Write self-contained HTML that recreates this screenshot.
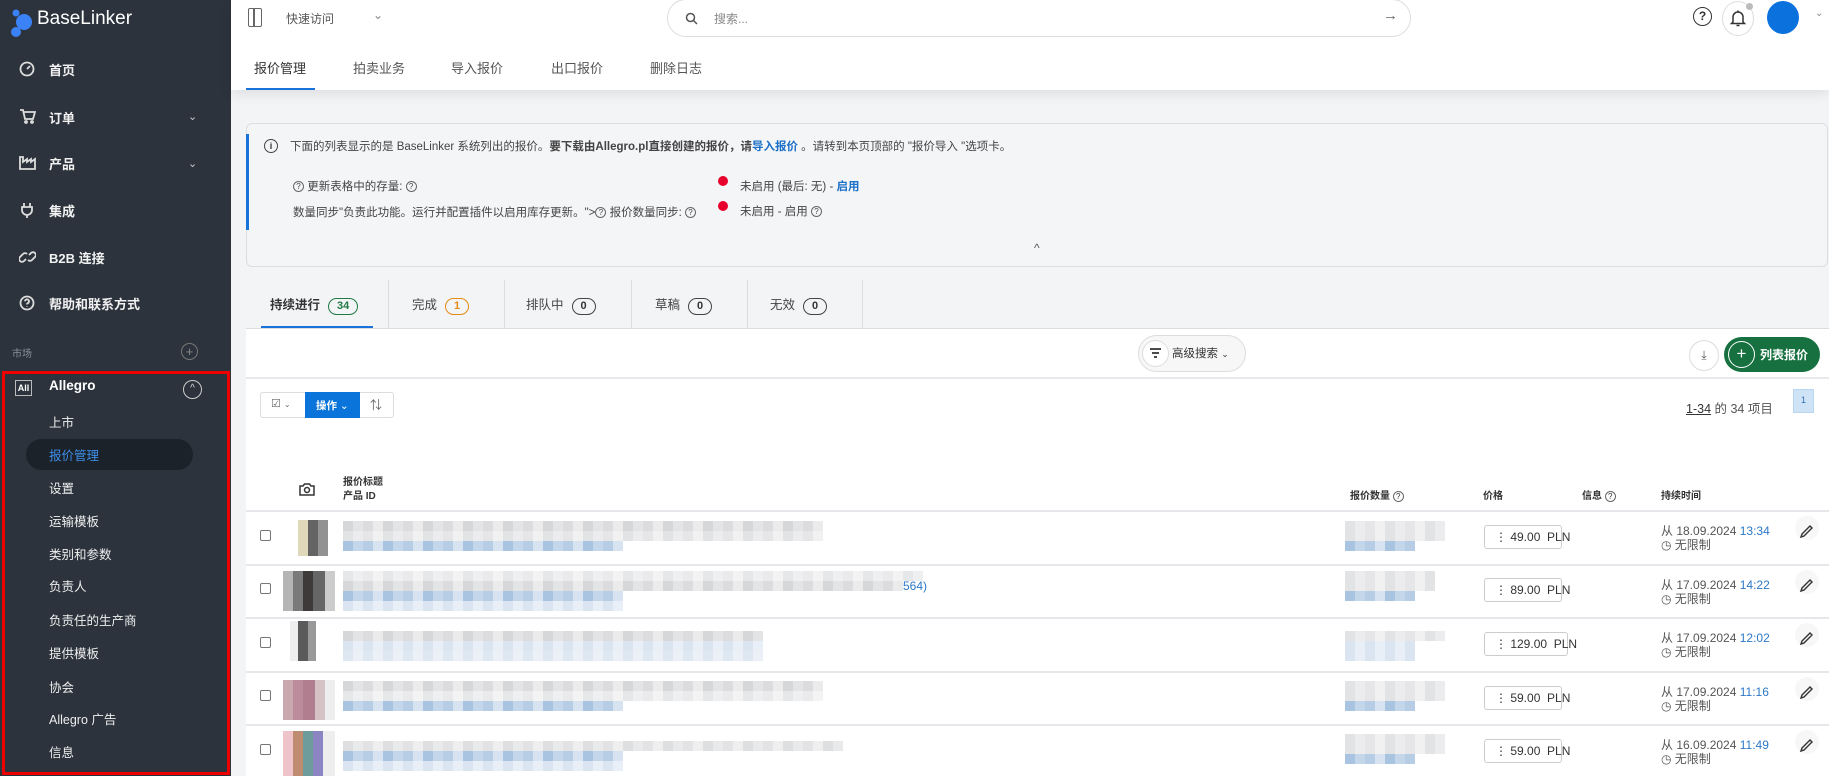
<!DOCTYPE html>
<html><head><meta charset="utf-8"><style>
*{box-sizing:border-box;margin:0;padding:0}
body{width:1829px;height:776px;overflow:hidden;background:#f3f4f6;font-family:"Liberation Sans","Noto Sans CJK SC",sans-serif;position:relative;color:#333}
.a{position:absolute;white-space:nowrap}
#sb{position:absolute;left:0;top:0;width:231px;height:776px;background:#2c333c;color:#fff}
.mi{position:absolute;left:49px;font-size:13px;font-weight:bold;color:#f1f1f1;white-space:nowrap}
.si{position:absolute;left:19px}
.chev{position:absolute;left:188px;color:#ccc;font-size:11px}
.sub{position:absolute;left:49px;font-size:12.5px;color:#eee;white-space:nowrap}
.gray{background:repeating-linear-gradient(90deg,#d6d7d9 0 10px,#e3e4e6 10px 20px,#dcdcdf 20px 30px,#ebebec 30px 40px)}
.blue{background:repeating-linear-gradient(90deg,#a9c4e0 0 10px,#c3d6ea 10px 20px,#b7cde6 20px 30px,#d7e3f0 30px 40px)}
.lblue{background:repeating-linear-gradient(90deg,#dbe5f1 0 10px,#e9eff6 10px 20px)}
.th{position:absolute;font-size:10px;font-weight:bold;color:#333;white-space:nowrap}
.q{display:inline-block;width:11px;height:11px;border:1px solid #666;border-radius:50%;font-size:8px;line-height:9px;text-align:center;font-weight:normal;vertical-align:middle}
.cb{position:absolute;left:260px;width:11px;height:11px;border:1px solid #777;border-radius:2px;background:#fff}
.price{position:absolute;left:1484px;width:78px;height:24px;border:1px solid #ccc;border-radius:3px;background:#fff;font-size:12px;line-height:22px;padding-left:10px;color:#333;white-space:nowrap}
.date{position:absolute;left:1661px;font-size:12px;color:#555;line-height:14px;white-space:nowrap}
.date b{font-weight:normal;color:#2c78c7}
.pen{position:absolute;left:1795px;width:24px;height:24px;border-radius:50%;background:#f7f7f7}
.rl{position:absolute;left:246px;width:1583px;height:2px;background:#e6e7ea}
.badge{display:inline-block;border:1.5px solid;border-radius:10px;font-size:11px;padding:0 8px;line-height:15px;margin-left:8px;font-weight:bold}
.st{position:absolute;top:294px;font-size:12.5px;color:#444;white-space:nowrap}
</style></head><body>
<div id="sb">
 <svg class="a" style="left:10px;top:8px" width="24" height="30" viewBox="0 0 24 30"><circle cx="6" cy="5" r="3.5" fill="#3b82f6"/><circle cx="14" cy="14" r="8" fill="#3b82f6"/><circle cx="6" cy="24" r="5" fill="#3b82f6"/></svg>
 <div class="a" style="left:37px;top:8px;font-size:19px;color:#fff">BaseLinker</div>
 <svg class="si" style="top:61px" width="16" height="16" viewBox="0 0 16 16" fill="none" stroke="#ddd" stroke-width="1.8"><circle cx="8" cy="8" r="6.5"/><path d="M8 8l3-3"/></svg><div class="mi" style="top:60px">首页</div>
 <svg class="si" style="top:108px" width="17" height="16" viewBox="0 0 17 16" fill="none" stroke="#ddd" stroke-width="1.8"><path d="M1 2h3l2 9h8l2-7H5"/><circle cx="7" cy="14" r="1"/><circle cx="13" cy="14" r="1"/></svg><div class="mi" style="top:108px">订单</div><div class="chev" style="top:110px">⌄</div>
 <svg class="si" style="top:155px" width="17" height="15" viewBox="0 0 17 15" fill="none" stroke="#ddd" stroke-width="1.8"><path d="M1 14V2h3v5l4-3v3l4-3v3l4-3v10z"/></svg><div class="mi" style="top:154px">产品</div><div class="chev" style="top:157px">⌄</div>
 <svg class="si" style="top:202px" width="16" height="16" viewBox="0 0 16 16" fill="none" stroke="#ddd" stroke-width="1.8"><path d="M5 1v4M11 1v4M3 5h10v3a5 5 0 0 1-10 0zM8 13v3"/></svg><div class="mi" style="top:201px">集成</div>
 <svg class="si" style="top:249px" width="17" height="16" viewBox="0 0 17 16" fill="none" stroke="#ddd" stroke-width="1.8"><path d="M7 10l-2 2a2.8 2.8 0 0 1-4-4l3-3a2.8 2.8 0 0 1 4 0M10 6l2-2a2.8 2.8 0 0 1 4 4l-3 3a2.8 2.8 0 0 1-4 0"/></svg><div class="mi" style="top:248px">B2B 连接</div>
 <svg class="si" style="top:295px" width="16" height="16" viewBox="0 0 16 16" fill="none" stroke="#ddd" stroke-width="1.8"><circle cx="8" cy="8" r="6.5"/><path d="M6 6.3a2 2 0 1 1 2.5 2c-.4.2-.5.5-.5 1.2M8 11.5v.5"/></svg><div class="mi" style="top:294px">帮助和联系方式</div>
 <div class="a" style="left:12px;top:345px;font-size:10px;color:#8a9099">市场</div>
 <div class="a" style="left:181px;top:343px;width:17px;height:17px;border:1px solid #777;border-radius:50%;color:#888;font-size:13px;line-height:15px;text-align:center">+</div>
 <div class="a" style="left:2px;top:371px;width:228px;height:404px;border:3px solid #e00"></div>
 <div class="a" style="left:15px;top:380px;width:17px;height:16px;border:1px solid #bbb;font-size:9px;font-weight:bold;text-align:center;line-height:14px">All</div>
 <div class="a" style="left:49px;top:378px;font-size:13.5px;font-weight:bold">Allegro</div>
 <div class="a" style="left:183px;top:380px;width:19px;height:19px;border:1.5px solid #ccc;border-radius:50%;text-align:center;font-size:10px;line-height:16px;color:#ddd">^</div>
 <div class="sub" style="top:412px">上市</div>
 <div class="a" style="left:26px;top:439px;width:167px;height:31px;border-radius:16px;background:#1c2229"></div>
 <div class="sub" style="top:445px;color:#3d8de8">报价管理</div>
 <div class="sub" style="top:478px">设置</div>
 <div class="sub" style="top:511px">运输模板</div>
 <div class="sub" style="top:544px">类别和参数</div>
 <div class="sub" style="top:576px">负责人</div>
 <div class="sub" style="top:610px">负责任的生产商</div>
 <div class="sub" style="top:643px">提供模板</div>
 <div class="sub" style="top:677px">协会</div>
 <div class="sub" style="top:709px">Allegro 广告</div>
 <div class="sub" style="top:742px">信息</div>
</div>
<!-- header -->
<div class="a" style="left:231px;top:0;width:1598px;height:90px;background:#fff;box-shadow:0 4px 12px rgba(0,0,0,.09)"></div>
<div class="a" style="left:248px;top:8px;width:14px;height:19px;border:1.5px solid #666;border-radius:2px"></div>
<div class="a" style="left:253px;top:8px;width:1.5px;height:19px;background:#666"></div>
<div class="a" style="left:286px;top:10px;font-size:12px;color:#555">快速访问</div>
<div class="a" style="left:373px;top:8px;font-size:12px;color:#888">⌄</div>
<div class="a" style="left:667px;top:-1px;width:744px;height:38px;border:1px solid #ddd;border-radius:19px;background:#fff"></div>
<svg class="a" style="left:685px;top:12px" width="13" height="13" viewBox="0 0 13 13" fill="none" stroke="#555" stroke-width="1.5"><circle cx="5.5" cy="5.5" r="4"/><path d="M8.5 8.5l3.5 3.5"/></svg>
<div class="a" style="left:714px;top:10px;font-size:12px;color:#888">搜索...</div>
<div class="a" style="left:1383px;top:7px;font-size:15px;color:#666">→</div>
<div class="a" style="left:1693px;top:7px;width:19px;height:19px;border:1.5px solid #333;border-radius:50%;text-align:center;font-size:12px;line-height:16px;font-weight:bold">?</div>
<div class="a" style="left:1722px;top:1px;width:32px;height:35px;border:1px solid #ddd;border-radius:50%"></div>
<svg class="a" style="left:1730px;top:9px" width="16" height="18" viewBox="0 0 16 18" fill="none" stroke="#333" stroke-width="1.5"><path d="M3 13V8a5 5 0 0 1 10 0v5l1.5 1.5h-13zM6.5 16.5h3M8 1.5v1.5"/></svg>
<div class="a" style="left:1746px;top:3px;width:7px;height:7px;border-radius:50%;background:#bbb"></div>
<div class="a" style="left:1767px;top:1px;width:32px;height:33px;border-radius:50%;background:#0b72dd"></div>
<div class="a" style="left:1815px;top:8px;font-size:10px;color:#888">⌄</div>
<div class="a" style="left:254px;top:58px;font-size:13px;color:#333">报价管理</div>
<div class="a" style="left:353px;top:58px;font-size:13px;color:#555">拍卖业务</div>
<div class="a" style="left:451px;top:58px;font-size:13px;color:#555">导入报价</div>
<div class="a" style="left:551px;top:58px;font-size:13px;color:#555">出口报价</div>
<div class="a" style="left:650px;top:58px;font-size:13px;color:#555">删除日志</div>
<div class="a" style="left:246px;top:88px;width:69px;height:2px;background:#1a73d9"></div>
<!-- info -->
<div class="a" style="left:246px;top:123px;width:1582px;height:144px;border:1px solid #dcdde0;border-radius:6px;background:#f4f5f7"></div>
<div class="a" style="left:246px;top:134px;width:3px;height:96px;background:#1a73d9"></div>
<div class="a" style="left:264px;top:139px;width:14px;height:14px;border:1.3px solid #444;border-radius:50%;font-size:9px;text-align:center;line-height:12px;font-weight:bold">i</div>
<div class="a" style="left:290px;top:138px;font-size:11.5px;color:#444">下面的列表显示的是 BaseLinker 系统列出的报价。<b>要下载由Allegro.pl直接创建的报价，请<span style="color:#1a6fc7">导入报价</span></b> 。请转到本页顶部的 "报价导入 "选项卡。</div>
<div class="a" style="left:293px;top:178px;font-size:11.5px;color:#444"><span class="q">?</span> 更新表格中的存量: <span class="q">?</span></div>
<div class="a" style="left:718px;top:176px;width:10px;height:10px;border-radius:50%;background:#e8002c"></div>
<div class="a" style="left:740px;top:178px;font-size:11.5px;color:#444">未启用 (最后: 无) - <b style="color:#1a6fc7">启用</b></div>
<div class="a" style="left:293px;top:204px;font-size:11.5px;color:#444">数量同步"负责此功能。运行并配置插件以启用库存更新。"&gt;<span class="q">?</span> 报价数量同步: <span class="q">?</span></div>
<div class="a" style="left:718px;top:201px;width:10px;height:10px;border-radius:50%;background:#e8002c"></div>
<div class="a" style="left:740px;top:203px;font-size:11.5px;color:#444">未启用 - 启用 <span class="q">?</span></div>
<div class="a" style="left:1034px;top:241px;font-size:12px;color:#555">^</div>
<!-- status tabs -->
<div class="st" style="left:270px;font-weight:bold;color:#333">持续进行<span class="badge" style="color:#1f7a45;border-color:#1f7a45">34</span></div>
<div class="a" style="left:261px;top:326px;width:112px;height:3px;background:#1a73d9"></div>
<div class="a" style="left:388px;top:280px;width:1px;height:48px;background:#ddd"></div>
<div class="st" style="left:412px">完成<span class="badge" style="color:#e58a14;border-color:#e58a14">1</span></div>
<div class="a" style="left:504px;top:280px;width:1px;height:48px;background:#ddd"></div>
<div class="st" style="left:526px">排队中<span class="badge" style="color:#333;border-color:#444">0</span></div>
<div class="a" style="left:631px;top:280px;width:1px;height:48px;background:#ddd"></div>
<div class="st" style="left:655px">草稿<span class="badge" style="color:#333;border-color:#444">0</span></div>
<div class="a" style="left:747px;top:280px;width:1px;height:48px;background:#ddd"></div>
<div class="st" style="left:770px">无效<span class="badge" style="color:#333;border-color:#444">0</span></div>
<div class="a" style="left:862px;top:280px;width:1px;height:48px;background:#ddd"></div>
<!-- panel -->
<div class="a" style="left:246px;top:328px;width:1583px;height:448px;background:#fff;border-top:1px solid #ddd"></div>
<div class="a" style="left:1138px;top:335px;width:108px;height:37px;border:1px solid #ddd;border-radius:19px;background:#f7f7f8"></div>
<div class="a" style="left:1142px;top:340px;width:27px;height:27px;border:1px solid #ddd;border-radius:50%;background:#fff"></div>
<svg class="a" style="left:1149px;top:347px" width="13" height="12" viewBox="0 0 13 12" stroke="#333" stroke-width="1.8"><path d="M1 2h11M3 6h7M5 10h3"/></svg>
<div class="a" style="left:1172px;top:345px;font-size:11.5px;color:#333">高级搜索 <span style="font-size:9px">⌄</span></div>
<div class="a" style="left:1689px;top:340px;width:30px;height:31px;border:1px solid #ddd;border-radius:50%;text-align:center;font-size:12px;line-height:29px;color:#555">⤓</div>
<div class="a" style="left:1724px;top:337px;width:96px;height:35px;border-radius:18px;background:#16703f"></div>
<div class="a" style="left:1728px;top:341px;width:27px;height:27px;border:1.5px solid #fff;border-radius:50%;color:#fff;text-align:center;font-size:17px;line-height:23px">+</div>
<div class="a" style="left:1760px;top:346px;font-size:12px;color:#fff;font-weight:bold">列表报价</div>
<div class="a" style="left:246px;top:377px;width:1583px;height:2px;background:#e8e9ec"></div>
<div class="a" style="left:260px;top:392px;width:134px;height:26px;border:1px solid #ddd;border-radius:3px;background:#fff"></div>
<div class="a" style="left:271px;top:397px;font-size:11px;color:#666">☑ <span style="font-size:8px">⌄</span></div>
<div class="a" style="left:305px;top:392px;width:55px;height:26px;background:#0a74da"></div>
<div class="a" style="left:316px;top:398px;font-size:10.5px;color:#fff;font-weight:bold">操作 <span style="font-weight:normal">⌄</span></div>
<div class="a" style="left:370px;top:396px;font-size:12px;color:#666">⇅</div>
<div class="a" style="left:1686px;top:398px;font-size:12.5px;color:#555"><u style="color:#333">1-34</u> 的 34 项目</div>
<div class="a" style="left:1793px;top:389px;width:21px;height:24px;background:#cfe3f6;border:1px solid #b9d6f2;font-size:9px;text-align:center;line-height:20px;color:#2f6fb4">1</div>
<!-- table header -->
<svg class="a" style="left:299px;top:482px" width="16" height="14" viewBox="0 0 16 14" fill="none" stroke="#333" stroke-width="1.5"><path d="M1 4h3l1.5-2h5L12 4h3v9H1z"/><circle cx="8" cy="8" r="2.5"/></svg>
<div class="th" style="left:343px;top:473px">报价标题</div>
<div class="th" style="left:343px;top:487px">产品 ID</div>
<div class="th" style="left:1350px;top:487px">报价数量 <span class="q">?</span></div>
<div class="th" style="left:1483px;top:487px">价格</div>
<div class="th" style="left:1582px;top:487px">信息 <span class="q">?</span></div>
<div class="th" style="left:1661px;top:487px">持续时间</div>
<div class="rl" style="top:510px"></div>
<!-- row 1 -->
<div class="cb" style="top:530px"></div>
<div class="a" style="left:290px;top:520px;width:40px;height:36px;opacity:.8;background:linear-gradient(90deg,#fff 0 8px,#d9ceaa 8px 18px,#3d3d3d 18px 28px,#777 28px 38px,#fff 38px)"></div>
<div class="a gray" style="left:343px;top:521px;width:480px;height:10px"></div>
<div class="a gray" style="left:343px;top:531px;width:480px;height:10px;opacity:.7"></div>
<div class="a blue" style="left:343px;top:541px;width:280px;height:10px"></div>
<div class="a gray" style="left:1345px;top:521px;width:100px;height:20px;opacity:.7"></div>
<div class="a blue" style="left:1345px;top:541px;width:70px;height:10px"></div>
<div class="price" style="top:525px">⋮ 49.00&nbsp; PLN</div>
<div class="date" style="top:524px">从 18.09.2024 <b>13:34</b><br>◷ 无限制</div>
<div class="pen" style="top:516px"></div>
<div class="rl" style="top:564px"></div>
<!-- row 2 -->
<div class="cb" style="top:583px"></div>
<div class="a" style="left:283px;top:571px;width:52px;height:40px;background:linear-gradient(90deg,#b5b5b5 0 10px,#7a7a7a 10px 20px,#3e3a3a 20px 30px,#666 30px 42px,#ccc 42px)"></div>
<div class="a gray" style="left:343px;top:571px;width:580px;height:10px;opacity:.6"></div>
<div class="a gray" style="left:343px;top:581px;width:560px;height:10px"></div>
<div class="a" style="left:903px;top:579px;font-size:12px;color:#2c78c7">564)</div>
<div class="a blue" style="left:343px;top:591px;width:280px;height:10px"></div>
<div class="a lblue" style="left:343px;top:601px;width:280px;height:10px"></div>
<div class="a gray" style="left:1345px;top:571px;width:90px;height:20px;opacity:.7"></div>
<div class="a blue" style="left:1345px;top:591px;width:70px;height:10px"></div>
<div class="price" style="top:578px">⋮ 89.00&nbsp; PLN</div>
<div class="date" style="top:578px">从 17.09.2024 <b>14:22</b><br>◷ 无限制</div>
<div class="pen" style="top:570px"></div>
<div class="rl" style="top:617px"></div>
<!-- row 3 -->
<div class="cb" style="top:637px"></div>
<div class="a" style="left:290px;top:621px;width:34px;height:40px;background:linear-gradient(90deg,#eee 0 8px,#5a5a5a 8px 18px,#999 18px 26px,#fff 26px)"></div>
<div class="a gray" style="left:343px;top:631px;width:420px;height:10px"></div>
<div class="a lblue" style="left:343px;top:641px;width:420px;height:10px"></div>
<div class="a lblue" style="left:343px;top:651px;width:420px;height:10px;opacity:.9"></div>
<div class="a gray" style="left:1345px;top:631px;width:100px;height:10px;opacity:.7"></div>
<div class="a lblue" style="left:1345px;top:641px;width:70px;height:20px"></div>
<div class="price" style="top:632px;width:84px">⋮ 129.00&nbsp; PLN</div>
<div class="date" style="top:631px">从 17.09.2024 <b>12:02</b><br>◷ 无限制</div>
<div class="pen" style="top:623px"></div>
<div class="rl" style="top:671px"></div>
<!-- row 4 -->
<div class="cb" style="top:690px"></div>
<div class="a" style="left:283px;top:680px;width:52px;height:40px;background:linear-gradient(90deg,#c9a9ad 0 10px,#bd8c9c 10px 20px,#b07e8e 20px 32px,#d5c2c5 32px 42px,#eee 42px)"></div>
<div class="a gray" style="left:343px;top:681px;width:480px;height:10px"></div>
<div class="a gray" style="left:343px;top:691px;width:480px;height:10px;opacity:.6"></div>
<div class="a blue" style="left:343px;top:701px;width:280px;height:10px"></div>
<div class="a gray" style="left:1345px;top:681px;width:100px;height:20px;opacity:.7"></div>
<div class="a blue" style="left:1345px;top:701px;width:70px;height:10px"></div>
<div class="price" style="top:686px">⋮ 59.00&nbsp; PLN</div>
<div class="date" style="top:685px">从 17.09.2024 <b>11:16</b><br>◷ 无限制</div>
<div class="pen" style="top:677px"></div>
<div class="rl" style="top:724px"></div>
<!-- row 5 -->
<div class="cb" style="top:744px"></div>
<div class="a" style="left:283px;top:731px;width:52px;height:45px;background:linear-gradient(90deg,#eec3c9 0 10px,#be8c71 10px 20px,#6e9c9c 20px 30px,#8b85c4 30px 40px,#eee 40px)"></div>
<div class="a gray" style="left:343px;top:741px;width:500px;height:10px;opacity:.8"></div>
<div class="a blue" style="left:343px;top:751px;width:280px;height:10px"></div>
<div class="a lblue" style="left:343px;top:761px;width:280px;height:10px"></div>
<div class="a gray" style="left:1345px;top:734px;width:100px;height:20px;opacity:.7"></div>
<div class="a blue" style="left:1345px;top:754px;width:70px;height:10px"></div>
<div class="price" style="top:739px">⋮ 59.00&nbsp; PLN</div>
<div class="date" style="top:738px">从 16.09.2024 <b>11:49</b><br>◷ 无限制</div>
<div class="pen" style="top:730px"></div>
<svg style="position:absolute;left:0;top:0" width="1829" height="776" fill="none" stroke="#333" stroke-width="1.4">
 <g id="p"><path d="M1802 534l8-8 2 2-8 8-3 1z"/></g>
 <path d="M1802 588l8-8 2 2-8 8-3 1z"/>
 <path d="M1802 641l8-8 2 2-8 8-3 1z"/>
 <path d="M1802 695l8-8 2 2-8 8-3 1z"/>
 <path d="M1802 748l8-8 2 2-8 8-3 1z"/>
</svg>
</body></html>
